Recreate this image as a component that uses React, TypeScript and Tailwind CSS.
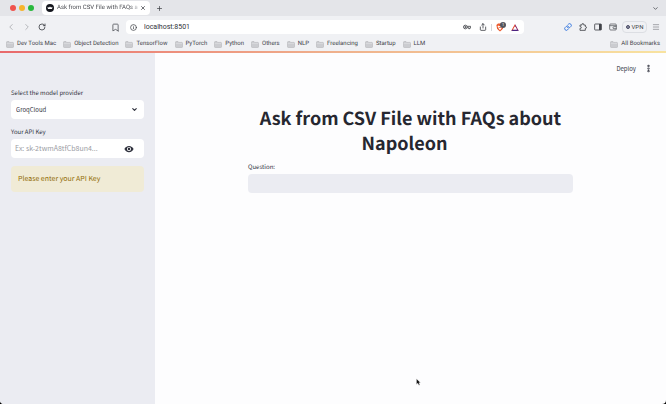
import React, { useState } from "react";
import {
  Bookmark,
  ChevronDown,
  ChevronLeft,
  ChevronRight,
  EllipsisVertical,
  Info,
  Link,
  Menu,
  Plus,
  RotateCw,
  Share,
  X,
} from "lucide-react";
import { MdVisibility } from "react-icons/md";

const bookmarks = [
  "Dev Tools Mac",
  "Object Detection",
  "TensorFlow",
  "PyTorch",
  "Python",
  "Others",
  "NLP",
  "Freelancing",
  "Startup",
  "LLM",
];

function Folder() {
  return (
    <svg viewBox="0 0 16 14" className="h-[7px] w-2 shrink-0" aria-hidden="true">
      <path d="M1 2.500Q1 1 2.500 1H6l1.500 1.800H13.500Q15 2.800 15 4.300V11.500Q15 13 13.500 13H2.500Q1 13 1 11.500Z" fill="#cbccd0" stroke="#aeafb3" strokeWidth="1" />
      <path d="M1.500 5H14.500" stroke="#e3e4e7" strokeWidth="1" />
    </svg>
  );
}

function BookmarkLink({ label }: { label: string }) {
  return (
    <a href="#" className="flex shrink-0 items-center gap-[3px] whitespace-nowrap">
      <Folder />
      {label}
    </a>
  );
}

function IconButton({ label, children }: { label: string; children: React.ReactNode }) {
  return (
    <button type="button" aria-label={label} className="flex shrink-0 items-center justify-center">
      {children}
    </button>
  );
}

function BraveShield() {
  return (
    <span className="relative flex">
      <svg viewBox="0 0 20 22" className="h-[9px] w-2" aria-hidden="true">
        <path d="M5 1H15L19 4.500L17.500 13Q16.500 17 10 21Q3.500 17 2.500 13L1 4.500Z" fill="#ec5a2c" />
        <path d="M5 6L8 7H12L15 6L16 9L13 12L13.500 14L10 17L6.500 14L7 12L4 9Z" fill="#fff" />
        <path d="M7 9L10 10L13 9L11 12H9Z" fill="#ec5a2c" />
      </svg>
      <span className="absolute -top-px left-1 flex size-[6px] items-center justify-center rounded-full bg-[#55565e] text-[4px] leading-none text-white">
        1
      </span>
    </span>
  );
}

function BatLogo() {
  return (
    <svg viewBox="0 0 20 18" className="h-[7px] w-2" aria-hidden="true">
      <path d="M10 0L0 18L5 15L10 7Z" fill="#e5452b" />
      <path d="M10 0L20 18L15 15L10 7Z" fill="#8a2465" />
      <path d="M0 18H20L15 14H5Z" fill="#4c2380" />
      <path d="M10 6L15 14H5Z" fill="#fff" />
    </svg>
  );
}

function KeyIcon() {
  return (
    <svg viewBox="0 0 24 24" className="size-2" fill="none" stroke="currentColor" strokeWidth="2.500" aria-hidden="true">
      <circle cx="7" cy="12" r="5.500" />
      <circle cx="7" cy="12" r="1.500" fill="currentColor" />
      <path d="M12.500 10H23V14H21V17H17V14H12.500" />
    </svg>
  );
}

function PuzzleIcon() {
  return (
    <svg viewBox="0 0 24 24" className="size-2" fill="none" stroke="currentColor" strokeWidth="2.500" strokeLinejoin="round" aria-hidden="true">
      <path d="M3 6H9V4A2.500 2.500 0 0 1 14 4V6H19V11H20A2.500 2.500 0 0 1 20 16H19V22H3V16H4.500A2.500 2.500 0 0 0 4.500 11H3Z" />
    </svg>
  );
}

function SidebarIcon() {
  return (
    <svg viewBox="0 0 24 24" className="size-2" fill="none" stroke="currentColor" strokeWidth="2.500" aria-hidden="true">
      <rect x="2" y="3" width="20" height="18" rx="1.500" />
      <path d="M15 3H22V21H15Z" fill="currentColor" stroke="none" />
    </svg>
  );
}

function WalletIcon() {
  return (
    <svg viewBox="0 0 24 24" className="size-2" fill="none" stroke="currentColor" strokeWidth="2" aria-hidden="true">
      <rect x="2" y="3" width="20" height="18" rx="3" />
      <path d="M2 8H22M22 11H15A3 3 0 0 0 15 17H22" />
    </svg>
  );
}

function BrowserChrome() {
  return (
    <header className="bg-[#f0f1f4] font-['Roboto',sans-serif] text-[6px] leading-none text-[#404248]">
      <div className="flex h-4 items-center bg-[#e4e5e9] pr-[7px] pl-[10px]">
        <div className="flex gap-[3px]">
          <span className="size-[6px] rounded-full bg-[#f0524c]" />
          <span className="size-[6px] rounded-full bg-[#f6b42c]" />
          <span className="size-[6px] rounded-full bg-[#28b83c]" />
        </div>
        <div className="ml-2 flex h-[14px] w-[108px] items-center rounded bg-white pr-1 pl-1">
          <svg viewBox="0 0 16 16" className="size-2 shrink-0" aria-hidden="true">
            <circle cx="8" cy="8" r="8" fill="#15171e" />
            <path d="M3 6L6 7L8 5L10 7L13 6L12 10H4Z" fill="#fff" />
          </svg>
          <span className="ml-[3px] bg-linear-to-r from-[#404248] from-90% to-[#d0d1d4] bg-clip-text leading-[10px] whitespace-nowrap text-transparent">
            Ask from CSV File with FAQs a
          </span>
          <span className="ml-auto flex">
            <IconButton label="Close tab"><X size={6} strokeWidth={3} /></IconButton>
          </span>
        </div>
        <span className="ml-[6px] flex">
          <IconButton label="New tab"><Plus size={7} strokeWidth={2.5} /></IconButton>
        </span>
        <span className="ml-auto flex">
          <IconButton label="Search tabs"><ChevronDown size={7} strokeWidth={2.5} /></IconButton>
        </span>
      </div>
      <div className="flex h-[22px] items-center pr-[6px] pl-[6px]">
        <div className="flex items-center gap-[6px]">
          <span className="flex gap-[6px] text-[#a9abb0]">
            <IconButton label="Back"><ChevronLeft size={10} /></IconButton>
            <IconButton label="Forward"><ChevronRight size={10} /></IconButton>
          </span>
          <IconButton label="Reload"><RotateCw size={8} strokeWidth={2.5} /></IconButton>
        </div>
        <span className="ml-[65px] flex text-[#65676d]">
          <IconButton label="Bookmark this page"><Bookmark size={9} strokeWidth={2.5} /></IconButton>
        </span>
        <div className="ml-[6px] flex h-[14px] min-w-0 flex-1 items-center rounded bg-white pr-[5px] pl-1">
          <Info size={7} strokeWidth={2.5} className="shrink-0" />
          <input
            aria-label="Address"
            defaultValue="localhost:8501"
            className="ml-[7px] min-w-0 flex-1 bg-transparent text-[7px] leading-[10px] text-[#303238] outline-none"
          />
          <IconButton label="Passwords"><KeyIcon /></IconButton>
          <span className="mr-1 ml-2 flex"><IconButton label="Share"><Share size={8} strokeWidth={2.5} /></IconButton></span>
          <span className="mr-1 h-[7px] w-px bg-[#d5d6da]" />
          <IconButton label="Brave Shields"><BraveShield /></IconButton>
          <span className="ml-[7px] flex"><IconButton label="Brave Rewards"><BatLogo /></IconButton></span>
        </div>
        <div className="ml-10 flex items-center gap-[7px]">
          <span className="flex text-[#3b7be0]"><IconButton label="Copy link"><Link size={8} strokeWidth={3} /></IconButton></span>
          <IconButton label="Extensions"><PuzzleIcon /></IconButton>
          <IconButton label="Sidebar"><SidebarIcon /></IconButton>
          <IconButton label="Wallet"><WalletIcon /></IconButton>
        </div>
        <button type="button" className="ml-[5px] flex h-3 w-[25px] shrink-0 items-center justify-center gap-[2px] rounded border border-[#dcdee3]">
          <span className="size-1 rounded-full border border-[#4a4c66] bg-[#8b8da2]" />
          VPN
        </button>
        <span className="ml-[5px] flex text-[#7d7f85]"><IconButton label="Menu"><Menu size={8} /></IconButton></span>
      </div>
      <nav aria-label="Bookmarks" className="flex h-[13px] items-center gap-[7px] px-[6px] pb-px">
        {bookmarks.map((label) => (
          <BookmarkLink key={label} label={label} />
        ))}
        <span className="ml-auto flex"><BookmarkLink label="All Bookmarks" /></span>
      </nav>
      <div className="h-[2px] bg-linear-to-r from-[#e8696c] via-[#efb08c] to-[#f8e3a0]" />
    </header>
  );
}

function Sidebar() {
  const [visible, setVisible] = useState(false);
  return (
    <aside className="w-[155px] shrink-0 bg-[#ebecf2] px-[11px] pt-[35px]">
      <label htmlFor="provider" className="block h-3 leading-[10px]">
        Select the model provider
      </label>
      <div className="grid items-center">
        <select
          id="provider"
          className="col-start-1 row-start-1 h-[19px] w-full appearance-none rounded bg-white pl-[5px] text-[6px] outline-none"
        >
          <option>GroqCloud</option>
        </select>
        <ChevronDown size={7} strokeWidth={4} className="pointer-events-none col-start-1 row-start-1 mr-[6px] justify-self-end" />
      </div>
      <label htmlFor="api-key" className="mt-2 block h-3 leading-[10px]">
        Your API Key
      </label>
      <div className="flex h-[19px] items-center rounded bg-white pr-[10px] pl-1">
        <input
          id="api-key"
          type={visible ? "text" : "password"}
          placeholder="Ex: sk-2twmA8tfCb8un4..."
          className="min-w-0 flex-1 bg-transparent text-[7px] outline-none placeholder:text-[#9b9ca4]"
        />
        <button type="button" aria-label="Show API key" onClick={() => setVisible(!visible)}>
          <MdVisibility size={10} />
        </button>
      </div>
      <div role="alert" className="mt-2 rounded bg-[#f0ebd6] px-[7px] py-2 text-[7px] leading-[10px] text-[#926c05]">
        Please enter your API Key
      </div>
    </aside>
  );
}

export default function App() {
  return (
    <div className="min-h-screen bg-black [text-rendering:geometricPrecision]">
      <div className="relative flex min-h-screen flex-col overflow-hidden rounded-b bg-[#fdfdfe]">
        <BrowserChrome />
        <div className="flex flex-1 font-['Noto_Sans_CJK_SC',sans-serif] text-[6px] text-[#31333f]">
          <Sidebar />
          <div className="min-w-0 flex-1">
            <div className="flex h-[31px] items-center justify-end gap-2 pr-[13px]">
              <button type="button" className="text-[6px] leading-[10px]">Deploy</button>
              <IconButton label="Main menu"><EllipsisVertical size={9} strokeWidth={4} /></IconButton>
            </div>
            <main className="px-[93px] pt-[22px]">
              <h1 className="text-center text-[18px] leading-[25px] font-bold text-[#262730]">
                Ask from CSV File with FAQs about Napoleon
                <span className="inline-block w-3" />
              </h1>
              <label htmlFor="question" className="mt-[6px] block h-3 leading-[10px]">
                Question:
              </label>
              <input id="question" className="block h-[19px] w-full rounded bg-[#ebecf2] px-1 text-[7px] outline-none" />
            </main>
          </div>
        </div>
        <svg viewBox="0 0 12 18" className="absolute top-[378px] left-[416px] h-2 w-[5px]" aria-hidden="true">
          <path d="M1 1V15L4 12L7 17L9.500 16L7 11H11Z" fill="#111" stroke="#fff" strokeWidth="1" />
        </svg>
      </div>
    </div>
  );
}
